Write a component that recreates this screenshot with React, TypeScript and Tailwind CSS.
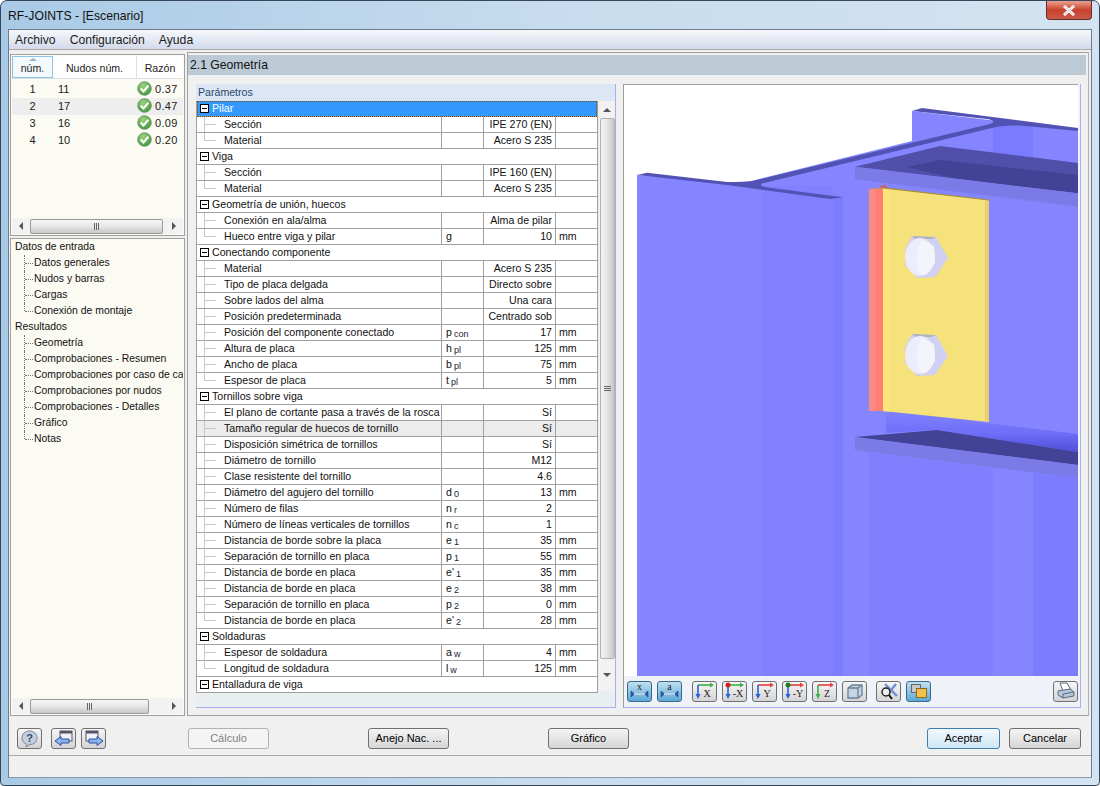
import React from "react";

const FONT = "[font-family:'Liberation_Sans',Arial,sans-serif]";

function Check() {
  return (
    <svg width="15" height="15" viewBox="0 0 15 15" className="shrink-0 -mt-[2px]">
      <defs>
        <radialGradient id="chk" cx="0.4" cy="0.3" r="0.8">
          <stop offset="0" stopColor="#9ed27e" />
          <stop offset="1" stopColor="#3f9140" />
        </radialGradient>
      </defs>
      <circle cx="7.5" cy="7.5" r="6.8" fill="url(#chk)" stroke="#5a8f5a" strokeWidth="0.8" />
      <path d="M3.8 7.6 L6.5 10.4 L11.4 4.6" fill="none" stroke="#fff" strokeWidth="2.2" />
    </svg>
  );
}

function HScroll({ thumb }: { thumb: string }) {
  return (
    <div className="h-[16px] flex items-center bg-[#f2f2f2] relative shrink-0">
      <div className="w-[18px] flex justify-center">
        <div className="w-0 h-0 border-y-[4px] border-y-transparent border-r-[4px] border-r-[#555]" />
      </div>
      <div className={`${thumb} h-[15px] rounded-[2px] border border-[#9a9a9a] bg-gradient-to-b from-[#f6f6f6] via-[#e6e6e6] to-[#c8c8c8] flex items-center justify-center`}>
        <span className="w-[1px] h-[7px] bg-[#666]" />
        <span className="w-[1px] h-[7px] bg-[#666] ml-[1px]" />
        <span className="w-[1px] h-[7px] bg-[#666] ml-[1px]" />
      </div>
      <div className="flex-1 flex justify-end pr-[7px]">
        <div className="w-0 h-0 border-y-[4px] border-y-transparent border-l-[4px] border-l-[#555]" />
      </div>
    </div>
  );
}

function VScroll() {
  return (
    <div className="w-[16px] h-[590px] ml-[1px] bg-[#f2f2f2] flex flex-col items-center">
      <div className="h-[17px] flex items-center justify-center">
        <div className="w-0 h-0 border-x-[4px] border-x-transparent border-b-[4px] border-b-[#555]" />
      </div>
      <div className="w-[15px] h-[541px] rounded-[2px] border border-[#b0b0b0] bg-gradient-to-r from-[#f4f4f4] via-[#e4e4e4] to-[#c6c6c6] flex flex-col items-center justify-center">
        <span className="w-[7px] h-[1px] bg-[#666]" />
        <span className="w-[7px] h-[1px] bg-[#666] mt-[1px]" />
        <span className="w-[7px] h-[1px] bg-[#666] mt-[1px]" />
      </div>
      <div className="flex-1 flex items-center justify-center">
        <div className="w-0 h-0 border-x-[4px] border-x-transparent border-t-[4px] border-t-[#555]" />
      </div>
    </div>
  );
}

const minus = (
  <span className="w-[9px] h-[9px] border border-black bg-white flex items-center justify-center shrink-0">
    <span className="w-[5px] h-[1px] bg-black" />
  </span>
);

function Group({ label, selected }: { label: string; selected?: boolean }) {
  return (
    <div
      className={`h-[16px] flex items-center pl-[3px] border-b border-[#a0a0a0] ${
        selected ? "bg-[#3399ff] text-white outline-1 outline-dotted outline-[#7a4a00] -outline-offset-1" : "bg-white"
      }`}
    >
      {minus}
      <span className="ml-[3px] whitespace-nowrap">{label}</span>
    </div>
  );
}

type R = { l: string; s?: string; sub?: string; v?: string; u?: string; hi?: boolean; last?: boolean };

function Row({ l, s, sub, v, u, hi, last }: R) {
  return (
    <div className={`h-[16px] grid grid-cols-[245px_42px_72px_41px] border-b border-[#a0a0a0] ${hi ? "bg-[#ececec]" : "bg-white"}`}>
      <div className="relative pl-[27px] border-r border-[#a0a0a0] overflow-hidden whitespace-nowrap leading-[15px]">
        <span className={`absolute left-[7px] top-0 w-[1px] bg-[#c8c8c8] ${last ? "h-[8px]" : "h-[16px]"}`} />
        <span className="absolute left-[8px] top-[7px] w-[11px] h-[1px] bg-[#c8c8c8]" />
        {l}
      </div>
      <div className="pl-[4px] border-r border-[#a0a0a0] whitespace-nowrap leading-[15px]">
        {s}
        {sub && <span className="text-[9px] ml-[2px] relative top-[1px] text-[#223]">{sub}</span>}
      </div>
      <div className="pr-[3px] text-right border-r border-[#a0a0a0] overflow-hidden whitespace-nowrap leading-[15px]">{v}</div>
      <div className="pl-[3px] whitespace-nowrap leading-[15px]">{u}</div>
    </div>
  );
}

const acero = "Acero S 235";

function Table() {
  return (
    <div className="w-[402px] h-[592px] border-l border-r border-[#a0a0a0] text-[#111] text-[10.6px] shrink-0">
      <Group label="Pilar" selected />
      <Row l="Sección" v="IPE 270 (EN)" />
      <Row l="Material" v={acero} last />
      <Group label="Viga" />
      <Row l="Sección" v="IPE 160 (EN)" />
      <Row l="Material" v={acero} last />
      <Group label="Geometría de unión, huecos" />
      <Row l="Conexión en ala/alma" v="Alma de pilar" />
      <Row l="Hueco entre viga y pilar" s="g" v="10" u="mm" last />
      <Group label="Conectando componente" />
      <Row l="Material" v={acero} />
      <Row l="Tipo de placa delgada" v="Directo sobre" />
      <Row l="Sobre lados del alma" v="Una cara" />
      <Row l="Posición predeterminada" v="Centrado sob" />
      <Row l="Posición del componente conectado" s="p" sub="con" v="17" u="mm" />
      <Row l="Altura de placa" s="h" sub="pl" v="125" u="mm" />
      <Row l="Ancho de placa" s="b" sub="pl" v="75" u="mm" />
      <Row l="Espesor de placa" s="t" sub="pl" v="5" u="mm" last />
      <Group label="Tornillos sobre viga" />
      <Row l="El plano de cortante pasa a través de la rosca" v="Sí" />
      <Row l="Tamaño regular de huecos de tornillo" v="Sí" hi />
      <Row l="Disposición simétrica de tornillos" v="Sí" />
      <Row l="Diámetro de tornillo" v="M12" />
      <Row l="Clase resistente del tornillo" v="4.6" />
      <Row l="Diámetro del agujero del tornillo" s="d" sub="0" v="13" u="mm" />
      <Row l="Número de filas" s="n" sub="r" v="2" />
      <Row l="Número de líneas verticales de tornillos" s="n" sub="c" v="1" />
      <Row l="Distancia de borde sobre la placa" s="e" sub="1" v="35" u="mm" />
      <Row l="Separación de tornillo en placa" s="p" sub="1" v="55" u="mm" />
      <Row l="Distancia de borde en placa" s="e'" sub="1" v="35" u="mm" />
      <Row l="Distancia de borde en placa" s="e" sub="2" v="38" u="mm" />
      <Row l="Separación de tornillo en placa" s="p" sub="2" v="0" u="mm" />
      <Row l="Distancia de borde en placa" s="e'" sub="2" v="28" u="mm" last />
      <Group label="Soldaduras" />
      <Row l="Espesor de soldadura" s="a" sub="w" v="4" u="mm" />
      <Row l="Longitud de soldadura" s="l" sub="w" v="125" u="mm" last />
      <Group label="Entalladura de viga" />
    </div>
  );
}

function Bolt({ cy }: { cy: number }) {
  const cx = 925;
  return (
    <g>
      <polygon
        points={`${cx - 13},${cy - 21} ${cx + 11},${cy - 20} ${cx + 23},${cy + 1} ${cx + 10},${cy + 20} ${cx - 8},${cy + 21} ${cx - 20},${cy + 8} ${cx - 20},${cy - 8}`}
        fill="#d0d0f2"
      />
      <polygon points={`${cx - 13},${cy - 21} ${cx + 11},${cy - 20} ${cx + 7},${cy - 18} ${cx - 10},${cy - 18}`} fill="#b4b4bc" />
      <ellipse cx={cx - 5} cy={cy} rx="15" ry="19" fill="#ecECfa" />
      <polygon points={`${cx - 9},${cy - 1} ${cx - 4},${cy - 17} ${cx + 9},${cy - 11} ${cx + 10},${cy + 6} ${cx + 1},${cy + 18} ${cx - 6},${cy + 16}`} fill="#f4f4fc" />
    </g>
  );
}

function Model() {
  return (
    <svg viewBox="624 85 454 591" width="454" height="591" className="block bg-white">
      <defs>
        <linearGradient id="fl" x1="0" y1="0" x2="0" y2="1">
          <stop offset="0" stopColor="#8282ff" />
          <stop offset="0.55" stopColor="#6e6ef8" />
          <stop offset="1" stopColor="#4e4ed8" />
        </linearGradient>
      </defs>
      <path d="M637 175 L727 183 Q745 183 755 180 L912 141 L912 111 L1078 130 L1078 676 L637 676 Z" fill="#8585ff" />
      <rect x="762" y="186" width="71" height="490" fill="#8181ff" />
      <rect x="833" y="196" width="10" height="480" fill="#7c7cff" />
      <rect x="993" y="124" width="40" height="46" fill="#7b7bff" />
      <polygon points="869,452 993,468 993,676 869,676" fill="#8080ff" />
      <polygon points="993,468 1033,473 1033,676 993,676" fill="#8585ff" />
      <polygon points="1033,473 1078,478 1078,676 1033,676" fill="#7c7cff" />
      <path d="M637 175 L647 172.7 L727 182 Q745 182 753 181 L990 124 Q998 121 987 119 L912 111 L922 108 L1078 128 L1078 131 L1020 125.5 Q1004 125 996 127 L762 183.5 Q758 186 768 187.5 L843 197.3 L830 199 L753 188.5 L727 185 Z" fill="#5252b4" />
      {/* beam upper flange */}
      <polygon points="855,166.7 940,146 1078,163 1078,193.3" fill="#5050aa" />
      <polygon points="907,167 940,160 1078,175 1078,193.3 953,178" fill="#424296" />
      <polygon points="855,166.7 1078,193.3 1078,206.7 855,179.3" fill="#7b7be8" />
      {/* beam lower */}
      <polygon points="886,411 1078,434 1078,452 937,430 886,433" fill="url(#fl)" />
      <polygon points="855,437 937,430 1078,452 1078,465" fill="#424296" />
      <polygon points="855,437 1078,465 1078,478 855,450" fill="#7b7be8" />
      {/* plate */}
      <polygon points="869,189 883,188 883,411 869,411" fill="#ff8a84" />
      <rect x="876" y="188.5" width="7" height="222.5" fill="#ff8070" />
      <polygon points="883,188 989,200 989,422 883,411" fill="#f5e27a" />
      <polygon points="883,188 890,188.8 890,411.7 883,411" fill="#fbe67a" />
      <polygon points="985,199.5 989,200 989,422 985,421.6" fill="#e6d070" />
      <polygon points="883,187.2 989,199.4 989,200.6 883,188.6" fill="#a89030" />
      <polygon points="869,189 883,187.4 883,188.6 869,189.4" fill="#c09060" />
      <polygon points="880,186 886,185 887,187.6 881,187.6" fill="#c86050" />
      <Bolt cy={257} />
      <Bolt cy={355} />
    </svg>
  );
}

function Btn({ on, children }: { on?: boolean; children: React.ReactNode }) {
  return (
    <div
      className={`w-[25px] h-[21px] rounded-[3px] border flex items-center justify-center shrink-0 ${
        on
          ? "border-[#3a6a8a] bg-gradient-to-b from-[#bfe0f2] to-[#5ba8d6]"
          : "border-[#707070] bg-gradient-to-b from-[#f6f6f6] to-[#d4d4d4]"
      }`}
    >
      {children}
    </div>
  );
}

function Beam({ t }: { t: string }) {
  return (
    <svg width="21" height="18" viewBox="0 0 21 18">
      <text x="10.5" y="8" fontSize="10" textAnchor="middle" fill="#222" fontFamily="'Liberation Serif', serif">{t}</text>
      <path d="M2 9 L5 11.5 L16 11.5 L19 9 L19 15 L16 12.5 L5 12.5 L2 15 Z" fill="#2a5fb0" stroke="#173a70" strokeWidth="0.5" />
      <rect x="5" y="11.2" width="11" height="1.6" fill="#dbe8f5" />
    </svg>
  );
}

function Axis({ t, a, b, dot }: { t: string; a: string; b: string; dot?: string }) {
  return (
    <svg width="23" height="18" viewBox="0 0 23 18">
      <path d="M5 3 L18 3" stroke={a} strokeWidth="1.6" />
      <path d="M17 0.5 L21 3 L17 5.5 Z" fill={a} />
      <path d="M5 3 L5 14" stroke={b} strokeWidth="1.6" />
      <path d="M2.5 12 L5 17 L7.5 12 Z" fill={b} />
      {dot && <circle cx="5" cy="3" r="2.5" fill={dot} />}
      <text x={t.length > 1 ? 15 : 14} y="15" fontSize="10" textAnchor="middle" fill="#222" fontFamily="'Liberation Serif', serif">{t}</text>
    </svg>
  );
}

function Toolbar() {
  return (
    <div className="h-[30px] bg-[#eff3f9] flex items-center pl-[3px] pr-[2px]">
      <div className="flex gap-[5px]">
        <Btn on><Beam t="x" /></Btn>
        <Btn on><Beam t="a" /></Btn>
      </div>
      <div className="flex gap-[5px] ml-[10px]">
        <Btn><Axis t="X" a="#3fb04a" b="#2a62d8" /></Btn>
        <Btn><Axis t="-X" a="#3fb04a" b="#2a62d8" dot="#d02020" /></Btn>
        <Btn><Axis t="Y" a="#e04040" b="#2a62d8" /></Btn>
        <Btn><Axis t="-Y" a="#e04040" b="#2a62d8" dot="#208020" /></Btn>
        <Btn><Axis t="Z" a="#e04040" b="#3fb04a" /></Btn>
        <Btn>
          <svg width="18" height="17" viewBox="0 0 18 17" fill="none" stroke="#6a7f99" strokeWidth="1.3">
            <path d="M2 5 L6 2 L16 2 L16 12 L12 15 L2 15 Z" fill="#c6d4e4" />
            <path d="M2 5 L12 5 L12 15 M12 5 L16 2" />
          </svg>
        </Btn>
      </div>
      <div className="flex gap-[5px] ml-[9px]">
        <Btn>
          <svg width="20" height="18" viewBox="0 0 20 18" fill="none">
            <path d="M6 2 L18 14 M17 2 L8 13" stroke="#6f8fd8" strokeWidth="2.4" />
            <circle cx="7" cy="10" r="4" stroke="#222" strokeWidth="1.5" fill="#eee" />
            <path d="M10 13 L13 17" stroke="#111" strokeWidth="2" />
          </svg>
        </Btn>
        <Btn on>
          <svg width="18" height="17" viewBox="0 0 18 17">
            <rect x="1.5" y="1.5" width="9" height="8" fill="#c8c8c8" stroke="#666" />
            <rect x="6.5" y="5.5" width="10" height="9" fill="#f2c24a" stroke="#8a6a20" />
          </svg>
        </Btn>
      </div>
      <div className="ml-auto">
        <Btn>
          <svg width="20" height="18" viewBox="0 0 20 18">
            <path d="M4 1 L11 1 L15 8 L7 9 Z" fill="#fff" stroke="#5a6a80" />
            <path d="M2 9 L14 7 L18 10 L18 14 L7 16 L2 13 Z" fill="#b8c6dc" stroke="#5a6a80" />
            <path d="M7 16 L7 12 L18 10" fill="none" stroke="#5a6a80" />
          </svg>
        </Btn>
      </div>
    </div>
  );
}

function Push({ w, label, off, focus }: { w: string; label: string; off?: boolean; focus?: boolean }) {
  return (
    <div
      className={`${w} h-[21px] rounded-[3px] border flex items-center justify-center shrink-0 bg-gradient-to-b text-[11px] ${
        off
          ? "border-[#adb2b5] from-[#f4f4f4] to-[#f4f4f4] text-[#838383]"
          : focus
            ? "border-[#3c7fb1] from-[#f2f9fd] to-[#cfe7f6] text-black"
            : "border-[#707070] from-[#f4f4f4] to-[#d6d6d6] text-black"
      }`}
    >
      {label}
    </div>
  );
}

function Tree({ label, sub, last }: { label: string; sub?: boolean; last?: boolean }) {
  return (
    <div className={`h-[16px] flex items-center whitespace-nowrap relative ${sub ? "pl-[22px]" : "pl-[3px]"}`}>
      {sub && (
        <>
          <span className={`absolute left-[12px] top-0 border-l border-dotted border-[#777] ${last ? "h-[8px]" : "h-[16px]"}`} />
          <span className="absolute left-[13px] top-[8px] w-[8px] border-t border-dotted border-[#777]" />
        </>
      )}
      {label}
    </div>
  );
}

const rows = [
  ["1", "11", "0.37"],
  ["2", "17", "0.47"],
  ["3", "16", "0.09"],
  ["4", "10", "0.20"],
];

export default function App() {
  return (
    <div className={`${FONT} w-[1100px] h-[786px] bg-white text-[10.6px] text-black overflow-hidden`}>
      <div className="w-[1100px] h-[786px] rounded-t-[7px] rounded-b-[4px] border border-[#37475a] bg-gradient-to-r from-[#a9cae6] via-[#c7dcee] to-[#d3e3f1] flex flex-col relative">
        <div className="h-[28px] flex items-start pl-[7px] pt-[8px] text-[12.2px] leading-[15px] text-[#111] shrink-0">RF-JOINTS - [Escenario]</div>
        <div className="absolute right-[7px] top-0 w-[46px] h-[19px] rounded-b-[4px] border border-t-0 border-[#6a2a2a] bg-gradient-to-b from-[#e8a090] via-[#c8402c] to-[#c85a48] flex items-center justify-center">
          <svg width="14" height="11" viewBox="0 0 14 11">
            <path d="M2 1 L12 10 M12 1 L2 10" stroke="#fff" strokeWidth="3" />
            <path d="M2 1 L12 10 M12 1 L2 10" stroke="#e4e4e4" strokeWidth="1.5" />
          </svg>
        </div>

        <div className="mx-[7px] h-[749px] bg-[#f0f0f0] border border-[#6c7c8c] border-b-[#8a9aaa] flex flex-col">
          {/* menu */}
          <div className="h-[20px] bg-gradient-to-b from-[#f6f8fb] to-[#d4daec] border-b border-[#a8a8a8] flex items-center pl-[6px] pt-[1px] gap-[14px] text-[12.2px] text-[#1c1c1c] shrink-0">
            <span>Archivo</span>
            <span>Configuración</span>
            <span>Ayuda</span>
          </div>

          {/* body */}
          <div className="h-[666px] flex pl-[1px] pt-[2px] shrink-0">
            <div className="w-[175px] pt-[2px] flex flex-col gap-[2px] shrink-0">
              <div className="h-[182px] border border-[#a0a0a0] bg-[#fcfbf3] flex flex-col p-[1px]">
                <div className="h-[23px] flex bg-white border-b border-[#e0e0e0] text-[#222] shrink-0">
                  <div className="w-[41px] border border-[#8cc4e8] bg-[#f4f9fd] flex items-center justify-center pt-[3px] relative">
                    <span className="absolute top-[1px] left-[16px] w-0 h-0 border-x-[4px] border-x-transparent border-b-[3px] border-b-[#9ab4cc]" />
                    núm.
                  </div>
                  <div className="w-[84px] border-r border-[#e0e0e0] flex items-center justify-center pt-[3px]">Nudos núm.</div>
                  <div className="w-[46px] flex items-center justify-center pt-[3px]">Razón</div>
                </div>
                <div className="h-[2px]" />
                {rows.map((r, i) => (
                  <div key={r[0]} className={`h-[17px] flex items-center text-[#222] text-[11px] ${i === 1 ? "bg-[#eeeeee]" : ""}`}>
                    <div className="w-[41px] text-center">{r[0]}</div>
                    <div className="w-[84px] pl-[5px]">{r[1]}</div>
                    <Check />
                    <div className="pl-[3px] tracking-[0.3px]">{r[2]}</div>
                  </div>
                ))}
                <div className="flex-1" />
                <HScroll thumb="w-[133px]" />
              </div>
              <div className="h-[478px] border border-[#a0a0a0] bg-[#fcfbf3] flex flex-col p-[1px]">
                <div className="-mt-[1px] flex-1 overflow-hidden text-[#111] text-[10.4px]">
                  <Tree label="Datos de entrada" />
                  <Tree sub label="Datos generales" />
                  <Tree sub label="Nudos y barras" />
                  <Tree sub label="Cargas" />
                  <Tree sub last label="Conexión de montaje" />
                  <Tree label="Resultados" />
                  <Tree sub label="Geometría" />
                  <Tree sub label="Comprobaciones - Resumen" />
                  <Tree sub label="Comprobaciones por caso de ca" />
                  <Tree sub label="Comprobaciones por nudos" />
                  <Tree sub label="Comprobaciones - Detalles" />
                  <Tree sub label="Gráfico" />
                  <Tree sub last label="Notas" />
                </div>
                <HScroll thumb="w-[119px]" />
              </div>
            </div>

            {/* main */}
            <div className="w-[902px] h-[664px] ml-[2px] border border-[#a0a0a0] border-r-[#b0b0b0] flex flex-col shrink-0">
              <div className="h-[20px] mt-[2px] mr-[2px] bg-[#bccad6] flex items-center pl-[2px] text-[12.2px] text-[#111] shrink-0">2.1 Geometría</div>
              <div className="flex pl-[8px] pt-[9px] gap-[7px]">
                <div className="w-[420px] h-[624px] bg-[#e9eef0] border-r border-b border-[#a8aef0] flex flex-col shrink-0">
                  <div className="h-[17px] bg-[#dce6f5] pl-[2px] flex items-center text-[#26476b] shrink-0">Parámetros</div>
                  <div className="flex items-start">
                    <Table />
                    <VScroll />
                  </div>
                </div>
                <div className="w-[458px] h-[624px] bg-[#eff3f9] border border-t-0 border-l-[#a0a0a0] border-r-[#a8aef0] border-b-[#a8aef0] flex flex-col shrink-0">
                  <div className="border-t border-[#a0a0a0] mr-[2px]">
                    <Model />
                  </div>
                  <Toolbar />
                </div>
              </div>
            </div>
          </div>

          {/* footer */}
          <div className="h-[40px] flex items-start pt-[12px] border-b border-[#a8a8a8] pl-[8px] shrink-0">
            <Btn>
              <svg width="19" height="18" viewBox="0 0 19 18">
                <path d="M9.5 1 C14 1 17 4 17 8 C17 12 14 14.5 10 14.5 L6 17 L6.5 14 C3.5 13 2 11 2 8 C2 4 5 1 9.5 1 Z" fill="#c4cfdd" stroke="#7a8898" />
                <text x="9.5" y="12" fontSize="11" fontWeight="bold" textAnchor="middle" fill="#3a4a78" fontFamily="'Liberation Sans', sans-serif">?</text>
              </svg>
            </Btn>
            <div className="ml-[9px] flex gap-[5px]">
              <Btn>
                <svg width="20" height="18" viewBox="0 0 20 18">
                  <rect x="6" y="1" width="12" height="10" fill="#eef2f8" stroke="#556" />
                  <rect x="6" y="1" width="12" height="2.5" fill="#556" />
                  <path d="M1 11 L7 6.5 L7 9 L15 9 L15 13 L7 13 L7 15.5 Z" fill="#8ab4f0" stroke="#2c5098" />
                </svg>
              </Btn>
              <Btn>
                <svg width="20" height="18" viewBox="0 0 20 18">
                  <rect x="2" y="1" width="12" height="10" fill="#eef2f8" stroke="#556" />
                  <rect x="2" y="1" width="12" height="2.5" fill="#556" />
                  <path d="M19 11 L13 6.5 L13 9 L5 9 L5 13 L13 13 L13 15.5 Z" fill="#8ab4f0" stroke="#2c5098" />
                </svg>
              </Btn>
            </div>
            <div className="ml-[82px]"><Push w="w-[81px]" label="Cálculo" off /></div>
            <div className="ml-[99px]"><Push w="w-[81px]" label="Anejo Nac. ..." /></div>
            <div className="ml-[99px]"><Push w="w-[81px]" label="Gráfico" /></div>
            <div className="ml-[298px]"><Push w="w-[73px]" label="Aceptar" focus /></div>
            <div className="ml-[9px]"><Push w="w-[72px]" label="Cancelar" /></div>
          </div>
          <div className="flex-1 bg-[#f0f0f0]" />
        </div>
      </div>
    </div>
  );
}
